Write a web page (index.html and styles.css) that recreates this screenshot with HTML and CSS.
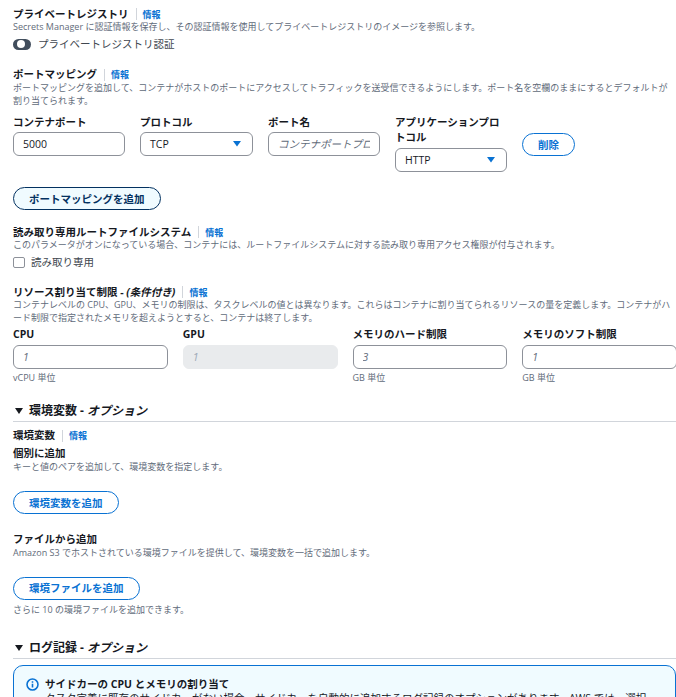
FILE: index.html
```html
<!DOCTYPE html>
<html lang="ja">
<head>
<meta charset="utf-8">
<title>コンテナ設定</title>
<link rel="stylesheet" href="styles.css">
</head>
<body>
<main class="page">
  <section class="field reg">
    <div class="title"><b>プライベートレジストリ</b><span class="sep"></span><a class="info">情報</a></div>
    <p class="desc">Secrets Manager に認証情報を保存し、その認証情報を使用してプライベートレジストリのイメージを参照します。</p>
    <div class="toggle-row"><span class="toggle"><i></i></span><span>プライベートレジストリ認証</span></div>
  </section>

  <section class="field ports">
    <div class="title"><b>ポートマッピング</b><span class="sep"></span><a class="info">情報</a></div>
    <p class="desc">ポートマッピングを追加して、コンテナがホストのポートにアクセスしてトラフィックを送受信できるようにします。ポート名を空欄のままにするとデフォルトが割り当てられます。</p>
    <div class="port-row">
      <div class="col c1"><label>コンテナポート</label><input class="input" value="5000"></div>
      <div class="col c2"><label>プロトコル</label><div class="input select">TCP<svg class="caret" width="8" height="6" viewBox="0 0 8 6"><path d="M0 0h8L4 5.5z"/></svg></div></div>
      <div class="col c3"><label>ポート名</label><input class="input" placeholder="コンテナポートプロトコル"></div>
      <div class="col c4"><label>アプリケーションプロトコル</label><div class="input select">HTTP<svg class="caret" width="8" height="6" viewBox="0 0 8 6"><path d="M0 0h8L4 5.5z"/></svg></div></div>
      <button class="btn del">削除</button>
    </div>
    <button class="btn add-port">ポートマッピングを追加</button>
  </section>

  <section class="field ro">
    <div class="title"><b>読み取り専用ルートファイルシステム</b><span class="sep"></span><a class="info">情報</a></div>
    <p class="desc">このパラメータがオンになっている場合、コンテナには、ルートファイルシステムに対する読み取り専用アクセス権限が付与されます。</p>
    <div class="check-row"><span class="check"></span><span>読み取り専用</span></div>
  </section>

  <section class="field res">
    <div class="title"><b>リソース割り当て制限 - <em>(条件付き)</em></b><span class="sep"></span><a class="info">情報</a></div>
    <p class="desc">コンテナレベルの CPU、GPU、メモリの制限は、タスクレベルの値とは異なります。これらはコンテナに割り当てられるリソースの量を定義します。コンテナがハード制限で指定されたメモリを超えようとすると、コンテナは終了します。</p>
    <div class="res-grid">
      <div class="col"><label>CPU</label><input class="input" placeholder="1"><small>vCPU 単位</small></div>
      <div class="col"><label>GPU</label><input class="input off" placeholder="1" disabled></div>
      <div class="col"><label>メモリのハード制限</label><input class="input" placeholder="3"><small>GB 単位</small></div>
      <div class="col"><label>メモリのソフト制限</label><input class="input" placeholder="1"><small>GB 単位</small></div>
    </div>
  </section>

  <section class="expander env">
    <h2><span class="tri"></span>環境変数 - <em>オプション</em></h2>
    <div class="title"><span class="plain">環境変数</span><span class="sep"></span><a class="info">情報</a></div>
    <div class="sub-title">個別に追加</div>
    <p class="desc">キーと値のペアを追加して、環境変数を指定します。</p>
    <button class="btn add-env">環境変数を追加</button>
    <div class="sub-title from-file">ファイルから追加</div>
    <p class="desc">Amazon S3 でホストされている環境ファイルを提供して、環境変数を一括で追加します。</p>
    <button class="btn add-file">環境ファイルを追加</button>
    <p class="desc more">さらに 10 の環境ファイルを追加できます。</p>
  </section>

  <section class="expander log">
    <h2><span class="tri"></span>ログ記録 - <em>オプション</em></h2>
    <div class="alert">
      <svg class="alert-icon" width="13" height="13" viewBox="0 0 14 14"><circle cx="7" cy="7" r="5.9" fill="none" stroke="#0972d3" stroke-width="1.7"/><path d="M7 6.2v4M7 3.6v1.6" stroke="#0972d3" stroke-width="1.7" fill="none"/></svg>
      <div class="alert-body">
        <div class="alert-title">サイドカーの CPU とメモリの割り当て</div>
        <p>タスク定義に既存のサイドカーがない場合、サイドカーを自動的に追加するログ記録のオプションがあります。AWS では、選択</p>
      </div>
    </div>
  </section>
</main>
</body>
</html>
```
FILE: styles.css
```css
* { box-sizing: border-box; }
html, body { margin: 0; height: 697px; overflow: hidden; background: #fff; }
body {
  font-family: "Open Sans", "Noto Sans CJK JP", "Noto Sans", sans-serif;
  font-size: 10.5px;
  line-height: 15px;
  color: #16191f;
}
.page { width: 678px; padding: 7px 0 0 13px; }
b, label, .sub-title, .alert-title { font-weight: 700; }
em { font-style: italic; }
p { margin: 0; }

.title { display: flex; align-items: center; height: 14px; font-size: 10.5px; color: #16191f; }
.title .plain { font-weight: 700; }
.sep { width: 1px; height: 12px; background: #d1d5db; margin: 0 6px 0 7px; }
.info { color: #0972d3; font-size: 9px; font-weight: 700; }
.desc { font-size: 9px; line-height: 12.75px; color: #5f6b7a; width: 663px; }

.toggle-row, .check-row { display: flex; align-items: center; height: 15px; margin-top: 3px; color: #414750; }
.toggle { width: 18px; height: 11px; border-radius: 6px; background: #414d5c; display: flex; align-items: center; padding-left: 4px; margin-right: 7px; }
.toggle i { width: 8px; height: 8px; border-radius: 50%; background: #fff; }

.ports { margin-top: 16px; }
.port-row { display: flex; margin-top: 8px; align-items: flex-start; }
.col label { display: block; line-height: 15px; }
.c1 { width: 112px; margin-right: 15px; }
.c2 { width: 113px; margin-right: 15px; }
.c3 { width: 112px; margin-right: 15px; }
.c4 { width: 112px; margin-right: 15px; }
.c1 label, .c2 label, .c3 label { height: 17px; }
.input {
  display: flex;
  width: 100%;
  height: 24px;
  border: 1px solid #8d9199;
  border-radius: 6px;
  padding: 0 9px;
  align-items: center;
  justify-content: space-between;
  font: inherit;
  font-size: 10.5px;
  color: #16191f;
  white-space: nowrap;
  background: #fff;
  outline: none;
}
.input::placeholder { color: #5f6b7a; font-style: italic; opacity: 1; }
.off { background: #e9ebed; border-color: #e9ebed; }
.off::placeholder { color: #9ba7b6; }
.c4 .input { margin-top: 3px; }
.caret { fill: #0972d3; flex: none; margin-right: 2px; }

.btn {
  display: block;
  height: 23px;
  border: 1px solid #0972d3;
  border-radius: 12px;
  background: #fff;
  color: #0972d3;
  font: 700 10.5px/1 "Open Sans", "Noto Sans CJK JP", sans-serif;
  padding: 0 15px;
}
.del { margin-top: 18px; width: 53px; padding: 0; }
.add-port { margin-top: 15px; background: #f0fbff; border-color: #033160; color: #033160; }

.ro { margin-top: 15px; }
.check-row { margin-top: 3px; }
.check { width: 12px; height: 11px; border: 1px solid #8d9199; border-radius: 2px; margin-right: 6px; }

.res { margin-top: 15px; }
.res-grid { display: grid; grid-template-columns: repeat(4, 154.75px); column-gap: 15px; margin-top: 2px; }
.res-grid label { height: 15px; margin-bottom: 3px; }
small { display: block; font-size: 9px; line-height: 12px; margin-top: 3px; color: #5f6b7a; }

h2 { margin: 0; height: 19px; padding-bottom: 2px; font-size: 12px; line-height: 16px; font-weight: 700; display: flex; align-items: center; border-bottom: 1px solid #d1d5db; width: 663px; }
h2 em { margin-left: 3px; }
.tri { width: 0; height: 0; border-left: 4px solid transparent; border-right: 4px solid transparent; border-top: 6px solid #16191f; margin: 0 6px 0 2px; }
.expander { width: 663px; }
.env { margin-top: 19px; }
.env .title { margin-top: 7px; }
.sub-title { line-height: 15px; margin-top: 3px; }
.add-env { margin-top: 18px; }
.from-file { margin-top: 18px; }
.add-file { margin-top: 17px; }
.more { margin-top: 4px; }
.log { margin-top: 23px; }
.alert {
  display: flex;
  margin-top: 6px;
  height: 60px;
  border: 1px solid #0972d3;
  border-radius: 10px;
  background: #f0fbff;
  padding: 11px 12px;
}
.alert-icon { flex: none; margin: 1px 6px 0 0; }
.alert-title { line-height: 15px; }
.alert-body p { line-height: 13px; white-space: nowrap; }
```
